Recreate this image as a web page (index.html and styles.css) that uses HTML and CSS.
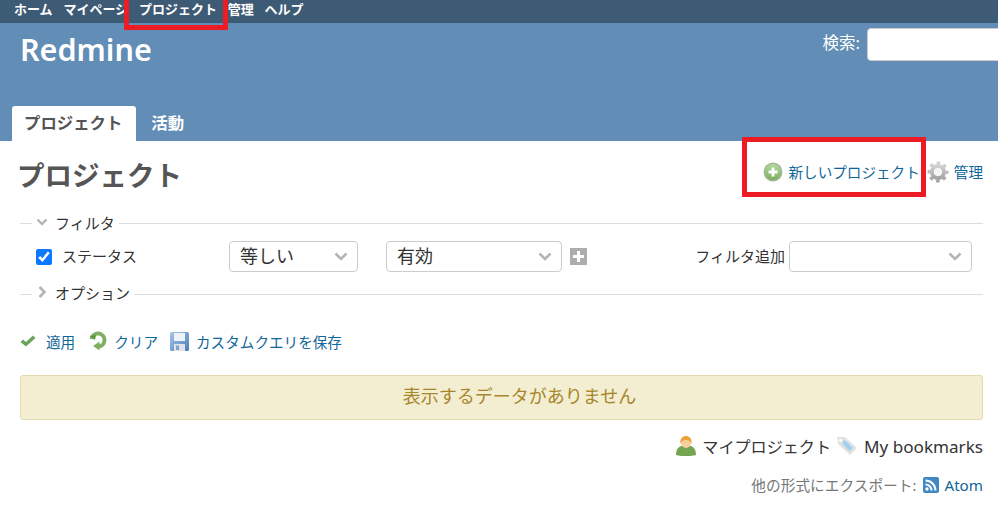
FILE: index.html
```html
<!DOCTYPE html>
<html lang="ja">
<head>
  <meta charset="UTF-8">
  <title>プロジェクト - Redmine</title>
  <link rel="stylesheet" href="styles.css">
</head>
<body>
  <div id="top-menu">
    <a href="#">ホーム</a>
    <a href="#">マイページ</a>
    <a href="#">プロジェクト</a>
    <a href="#">管理</a>
    <a href="#">ヘルプ</a>
  </div>

  <div id="header">
    <div class="title-row">
      <h1>Redmine</h1>
      <div class="search">
        <label>検索:</label>
        <input type="text" class="search-box">
      </div>
    </div>
    <div class="tabs">
      <a href="#" class="tab selected">プロジェクト</a>
      <a href="#" class="tab">活動</a>
    </div>
  </div>

  <div id="content">
    <div class="page-head">
      <h2>プロジェクト</h2>
      <div class="contextual">
        <a href="#" class="icon-link">
          <svg class="ico" width="20" height="20" viewBox="0 0 20 20">
            <defs><linearGradient id="g-add" x1="0" y1="0" x2="0" y2="1"><stop offset="0" stop-color="#b5d8a0"/><stop offset="1" stop-color="#79b05a"/></linearGradient></defs>
            <circle cx="10" cy="10" r="9.500" fill="#a3b89a"/><circle cx="10" cy="10" r="8" fill="url(#g-add)"/>
            <path d="M8.500 5.500h3v3h3v3h-3v3h-3v-3h-3v-3h3z" fill="#fff"/>
          </svg>
          新しいプロジェクト
        </a>
        <a href="#" class="icon-link">
          <svg class="ico" width="22" height="22" viewBox="0 0 22 22">
            <defs><linearGradient id="g-gear" x1="0" y1="0" x2="0" y2="1"><stop offset="0" stop-color="#d2d2d2"/><stop offset="1" stop-color="#a4a4a4"/></linearGradient></defs>
            <circle cx="11" cy="11" r="8.500" fill="none" stroke="url(#g-gear)" stroke-width="4" stroke-dasharray="3.340 3.340" stroke-dashoffset="1.670"/>
            <circle cx="11" cy="11" r="6" fill="none" stroke="url(#g-gear)" stroke-width="4"/>
            <circle cx="11" cy="11" r="3.500" fill="#f4f4f4"/>
          </svg>
          管理
        </a>
      </div>
    </div>

    <div class="fieldset">
      <div class="legend">
        <svg class="chev" width="12" height="8" viewBox="0 0 12 8"><path d="M1.500 1.500 6 6l4.500-4.500" fill="none" stroke="#b4b4b4" stroke-width="2.400"/></svg>
        フィルタ
      </div>
    </div>

    <div class="filter-row">
      <label class="filter-name"><input type="checkbox" class="check" checked> <span class="row-text">ステータス</span></label>
      <div class="select op"><span class="row-text">等しい</span><svg class="chev" width="14" height="9" viewBox="0 0 14 9"><path d="M1.500 1.500 7 7l5.500-5.500" fill="none" stroke="#b4b4b4" stroke-width="2.600"/></svg></div>
      <div class="select val"><span class="row-text">有効</span><svg class="chev" width="14" height="9" viewBox="0 0 14 9"><path d="M1.500 1.500 7 7l5.500-5.500" fill="none" stroke="#b4b4b4" stroke-width="2.600"/></svg></div>
      <svg class="plus" width="17" height="17" viewBox="0 0 17 17"><rect width="17" height="17" fill="#adadad"/><path d="M7 3h3v4h4v3h-4v4H7v-4H3V7h4z" fill="#fff"/></svg>
      <div class="add-filter">
        <span class="row-text">フィルタ追加</span>
        <div class="select add"><svg class="chev" width="14" height="9" viewBox="0 0 14 9"><path d="M1.500 1.500 7 7l5.500-5.500" fill="none" stroke="#b4b4b4" stroke-width="2.600"/></svg></div>
      </div>
    </div>

    <div class="fieldset collapsed">
      <div class="legend">
        <svg class="chev" width="12" height="14" viewBox="0 0 12 14"><path d="M3.500 2 8.500 7l-5 5" fill="none" stroke="#b4b4b4" stroke-width="2.600"/></svg>
        オプション
      </div>
    </div>

    <div class="buttons">
      <a href="#" class="icon-link">
        <svg class="ico" width="16" height="14" viewBox="0 0 16 14"><path d="M.500 8l2.500-2.500 3 2.500 7-6.500L15.500 4 6 12.500z" fill="#6aa35a"/></svg>
        <span class="after-check">適用</span>
      </a>
      <a href="#" class="icon-link">
        <svg class="ico clear-ico" width="18" height="20" viewBox="0 0 18 20">
          <path d="M2.600 8A6.500 6.500 0 1 1 9 15.500" fill="none" stroke="#7fb062" stroke-width="4"/>
          <path d="M.500 5 7 4 6 9z" fill="#5f9645"/>
          <path d="M10.500 10.500v9L4 15z" fill="#7fb062"/>
        </svg>
        クリア
      </a>
      <a href="#" class="icon-link">
        <svg class="ico" width="19" height="19" viewBox="0 0 19 19">
          <defs><linearGradient id="g-save" x1="0" y1="0" x2="1" y2="1"><stop offset="0" stop-color="#a8c6e8"/><stop offset="1" stop-color="#4a7fbd"/></linearGradient></defs>
          <rect width="19" height="19" rx="1.500" fill="url(#g-save)"/>
          <rect x="4" y="1" width="11" height="8" fill="#eef3f9"/>
          <rect x="4" y="12" width="11" height="7" fill="#dfe3e8"/>
          <rect x="6" y="13.500" width="3" height="4.500" fill="#7fa3cf"/>
        </svg>
        カスタムクエリを保存
      </a>
    </div>

    <div class="nodata">表示するデータがありません</div>

    <div class="other-links">
      <a href="#" class="dark-link">
        <svg class="ico" width="20" height="20" viewBox="0 0 20 20">
          <path d="M0 19c0-5 2-8 5-9h10c3 1 5 4 5 9-3 1.500-17 1.500-20 0z" fill="#76a552"/>
          <circle cx="10" cy="7" r="5" fill="#f7cf9a"/>
          <path d="M4.500 8C3.500 2.500 7 0 10 0s6.500 2.500 5.500 8c-.8-2.500-2.500-4-5.500-4S5.300 5.500 4.500 8z" fill="#eda33b"/>
        </svg>
        マイプロジェクト
      </a>
      <a href="#" class="dark-link">
        <svg class="ico" width="22" height="20" viewBox="0 0 22 20">
          <path d="M1 1h8l12 11-7 7L2 8z" fill="#e2e2e2"/>
          <path d="M7.500 4.500h2l7.500 7.500-3.500 3.500-7-7.500z" fill="#a5d0ef"/>
          <circle cx="4.500" cy="4.500" r="1.500" fill="#fff"/>
        </svg>
        <span class="latin">My bookmarks</span>
      </a>
    </div>

    <p class="other-formats">
      他の形式にエクスポート:
      <a href="#" class="icon-link atom">
        <svg class="ico" width="16" height="16" viewBox="0 0 16 16"><rect width="16" height="16" rx="2" fill="#3f88c5"/><circle cx="4" cy="12" r="1.700" fill="#fff"/><path d="M2.500 7.500a6 6 0 0 1 6 6M2.500 3.500a10 10 0 0 1 10 10" fill="none" stroke="#fff" stroke-width="2"/></svg>
        Atom
      </a>
    </p>
  </div>

  <!-- annotation boxes on the screenshot -->
  <div class="mark mark-menu"></div>
  <div class="mark mark-new"></div>
</body>
</html>
```

FILE: styles.css
```css
html, body{
  margin: 0;
  padding: 0;
  overflow: hidden;
}
body{
  position: relative;
  width: 998px;
  height: 518px;
  background: #fff;
  color: #333;
  font-family: "Noto Sans", "Noto Sans CJK JP", sans-serif;
  font-size: 15px;
}
a{
  color: #169;
  text-decoration: none;
}

#top-menu{
  display: flex;
  gap: 10.800px;
  height: 23px;
  padding-left: 14px;
  background: #3e5b76;
  font-size: 13px;
  font-weight: 700;
  line-height: 18px;
}
#top-menu a{
  color: #fff;
}

#header{
  display: flex;
  flex-direction: column;
  justify-content: space-between;
  height: 118px;
  padding-left: 12px;
  background: #628db6;
  color: #fff;
}
.title-row{
  display: flex;
  justify-content: space-between;
  padding: 5px 0 0 8px;
}
h1{
  margin: 0;
  font-size: 30.500px;
  font-weight: 600;
  line-height: 43px;
}
.search{
  display: flex;
  gap: 7px;
  align-items: flex-start;
  font-size: 16.500px;
  line-height: 30px;
}
.search-box{
  box-sizing: border-box;
  width: 140px;
  height: 33px;
  margin: 0 -9px 0 0;
  border: 1px solid #ccc;
  border-radius: 4px;
  background: #fff;
}
.tabs{
  display: flex;
  gap: 3px;
}
.tab{
  padding: 0 14px 1px 12px;
  color: #fff;
  font-size: 16.400px;
  font-weight: 700;
  line-height: 34px;
}
.tab.selected{
  background: #fff;
  border-radius: 3px 3px 0 0;
  color: #555;
}

#content{
  padding: 0 15px 0 20px;
}
.page-head{
  display: flex;
  justify-content: space-between;
  align-items: center;
  height: 69px;
}
h2{
  margin: 0 0 4px -3px;
  color: #555;
  font-size: 27.500px;
  font-weight: 700;
}
.contextual{
  display: flex;
  align-items: center;
  gap: 7px;
  margin-bottom: 8px;
}
.icon-link{
  display: inline-flex;
  align-items: center;
  gap: 5px;
  font-size: 14.600px;
}
.ico{
  flex: none;
}

.fieldset{
  height: 1px;
  margin-top: 13px;
  background: #ddd;
}
.fieldset.collapsed{
  margin-top: 22px;
}
.legend{
  display: inline-flex;
  align-items: center;
  gap: 7px;
  position: relative;
  top: -13px;
  height: 22px;
  margin-left: 12px;
  padding: 0 4px;
  background: #fff;
  font-size: 15px;
}

.filter-row{
  display: flex;
  align-items: center;
  height: 31px;
  margin-top: 17px;
}
.row-text{
  padding-bottom: 3px;
}
.filter-name{
  display: flex;
  align-items: center;
  gap: 10px;
  width: 209px;
  padding-left: 16px;
  box-sizing: border-box;
}
.check{
  width: 16px;
  height: 16px;
  margin: 0;
  accent-color: #0b79ff;
}
.select{
  display: flex;
  align-items: center;
  justify-content: space-between;
  box-sizing: border-box;
  height: 31px;
  padding: 0 9px 0 10px;
  border: 1px solid #ccc;
  border-radius: 4px;
  background: #fff;
  font-size: 18px;
}
.select.op{
  width: 129px;
  margin-right: 28px;
}
.select.val{
  width: 176px;
  margin-right: 8px;
}
.select.add{
  width: 183px;
  justify-content: flex-end;
}
.plus{
  flex: none;
}
.add-filter{
  display: flex;
  align-items: center;
  gap: 4px;
  margin-left: auto;
  margin-right: 11px;
}

.buttons{
  display: flex;
  gap: 12px;
  margin-top: 35px;
  height: 22px;
  align-items: center;
}
.buttons .icon-link{
  gap: 7px;
}
.after-check{
  margin-left: 3px;
}
.clear-ico{
  margin-left: 2px;
}

.nodata{
  box-sizing: border-box;
  height: 45px;
  margin-top: 23px;
  padding-left: 36px;
  border: 1px solid #e4d8b0;
  border-radius: 3px;
  background: #f3edd1;
  color: #a6872a;
  font-size: 18px;
  line-height: 41px;
  text-align: center;
}

.other-links{
  display: flex;
  justify-content: flex-end;
  gap: 5px;
  margin-top: 14px;
  font-size: 16.100px;
}
.dark-link{
  display: inline-flex;
  align-items: center;
  gap: 6px;
  color: #333;
}
.latin{
  font-size: 17.100px;
}
.other-formats{
  display: flex;
  justify-content: flex-end;
  align-items: center;
  gap: 7px;
  margin: 16px 0 0;
  color: #777;
  font-size: 14.700px;
}
.icon-link.atom{
  font-size: 15.200px;
}

.mark{
  position: absolute;
  box-sizing: border-box;
  border: 5px solid #ed1c24;
}
.mark-menu{
  left: 124px;
  top: -6px;
  width: 104px;
  height: 36px;
}
.mark-new{
  left: 742px;
  top: 137px;
  width: 184px;
  height: 60px;
}
```
